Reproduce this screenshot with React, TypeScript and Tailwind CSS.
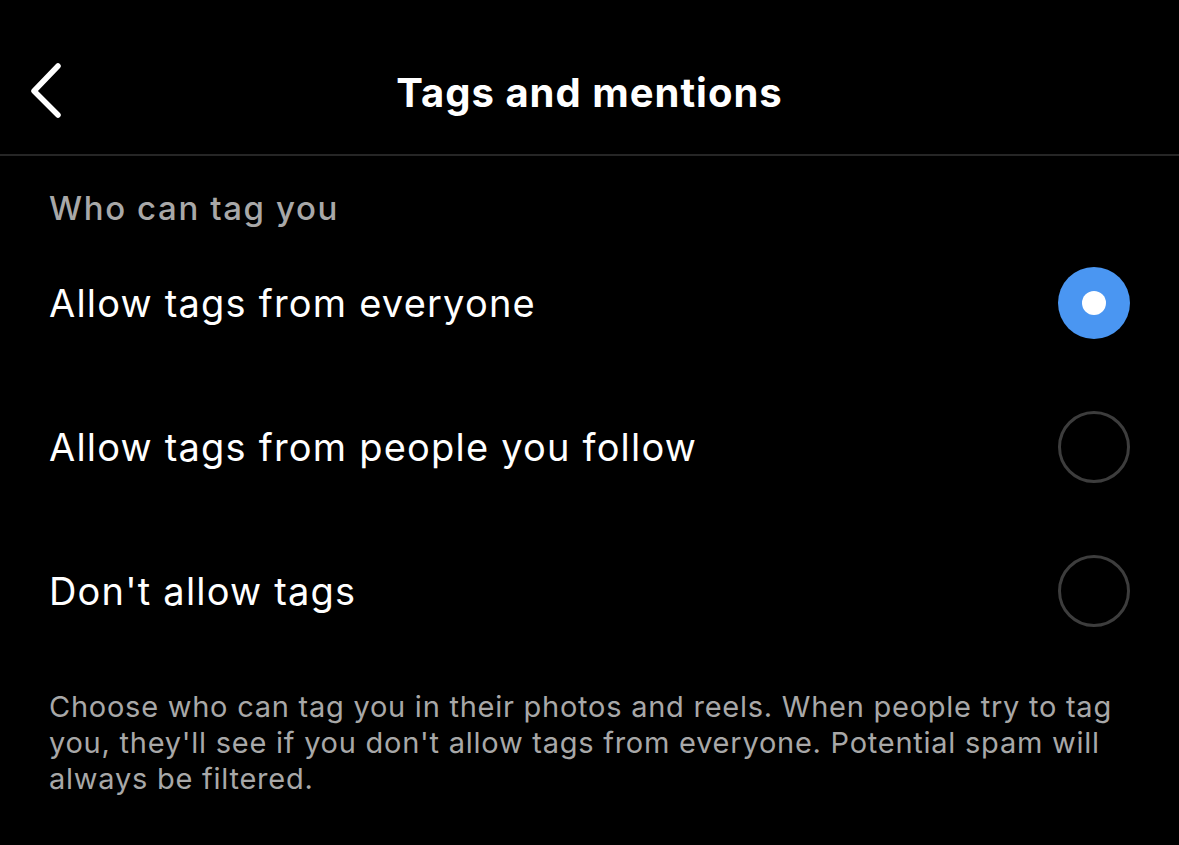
import React, { useState } from "react";

const options = [
  "Allow tags from everyone",
  "Allow tags from people you follow",
  "Don't allow tags",
];

function Radio({ on }: { on: boolean }) {
  if (on) {
    return (
      <div className="w-[72px] h-[72px] rounded-full bg-[#4a96f2] flex items-center justify-center">
        <div className="w-[24px] h-[24px] rounded-full bg-white" />
      </div>
    );
  }
  return <div className="w-[72px] h-[72px] rounded-full border-[3px] border-[#3d3d3d]" />;
}

export default function App() {
  const [selected, setSelected] = useState(0);

  return (
    <div
      className="w-[1179px] h-[845px] bg-black text-white overflow-hidden"
      style={{ fontFamily: "Inter, 'Noto Sans', sans-serif" }}
    >
      {/* header */}
      <div className="relative h-[156px] flex items-center justify-center border-b-2 border-[#262626]">
        <button className="absolute left-[24px] top-[58px] w-[44px] h-[64px] flex items-center justify-center">
          <svg width="40" height="64" viewBox="0 0 40 64" fill="none">
            <path
              d="M32 8 L8 33 L32 57"
              stroke="white"
              strokeWidth="5.5"
              strokeLinecap="round"
              strokeLinejoin="round"
            />
          </svg>
        </button>
        <h1 className="text-[40px] font-bold tracking-[1px] mt-[32px] leading-[48px]">Tags and mentions</h1>
      </div>

      <div className="px-[49px]">
        <div className="pt-[32px] text-[33px] font-medium text-[#a8a8a8] leading-[40px] tracking-[1.6px]">
          Who can tag you
        </div>

        <div className="mt-[3px]">
          {options.map((o, i) => (
            <div
              key={o}
              onClick={() => setSelected(i)}
              className="h-[144px] flex items-center justify-between cursor-pointer"
            >
              <span className="text-[38px] leading-[44px] tracking-[1.2px]">{o}</span>
              <Radio on={selected === i} />
            </div>
          ))}
        </div>

        <p className="mt-[26px] w-[1080px] text-[29px] leading-[36px] text-[#a8a8a8] tracking-[0.75px]">
          Choose who can tag you in their photos and reels. When people try to tag you, they'll see if you don't allow tags from everyone. Potential spam will always be filtered.
        </p>
      </div>
    </div>
  );
}
